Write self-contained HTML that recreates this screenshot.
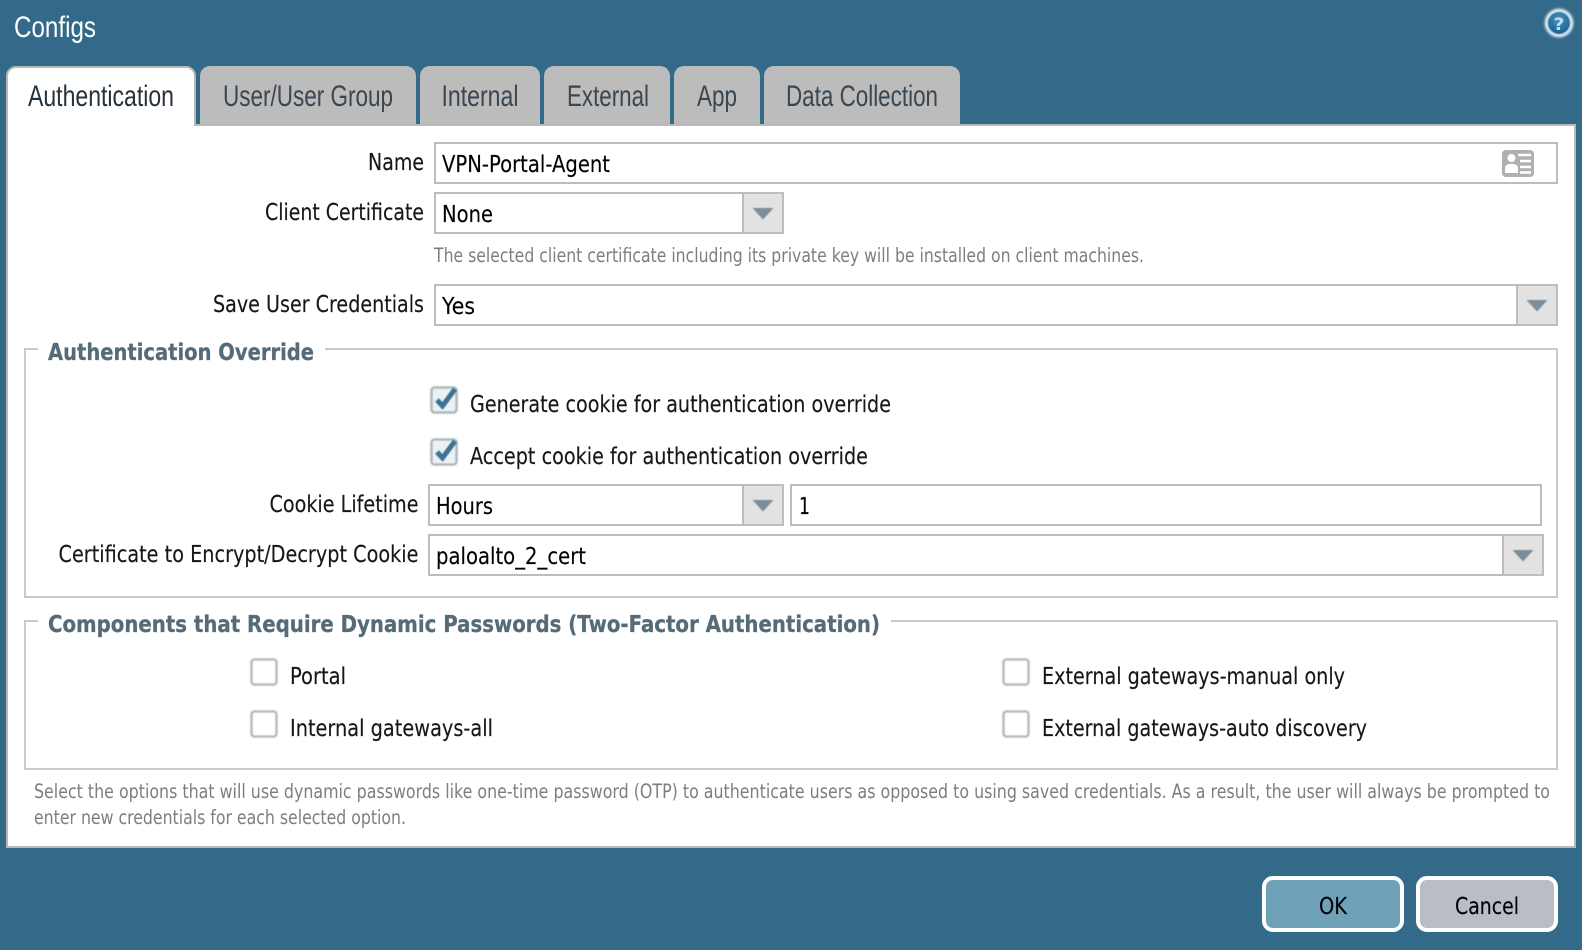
<!DOCTYPE html>
<html lang="en">
<head>
<meta charset="utf-8">
<title>Configs</title>
<style>
html,body{margin:0;padding:0;background:#346a89;width:1582px;height:950px;overflow:hidden}
svg{display:block}
text{font-family:"DejaVu Sans","Liberation Sans",sans-serif;font-size:23px;fill:#14181b;white-space:pre;stroke:currentColor;stroke-width:.15px;color:#14181b}
.tab{font-family:"Liberation Sans",sans-serif;font-size:30px;fill:#3a4650;stroke:none}
.hint{font-size:19.5px;fill:#7e7e7e;stroke:none}
.leg{font-weight:bold;font-size:23.500px;fill:#566b78;stroke:#566b78;stroke-width:.3px}
</style>
</head>
<body>
<svg width="1582" height="950" viewBox="0 0 1582 950" xmlns="http://www.w3.org/2000/svg">
<defs>
<filter id="soft" x="-20%" y="-20%" width="140%" height="140%"><feGaussianBlur stdDeviation="0.6"/></filter>
<filter id="soft2" x="-20%" y="-20%" width="140%" height="140%"><feGaussianBlur stdDeviation="1"/></filter>
<g id="arrow"><path d="M-10.500,-5 H10.500 L0,6.500 Z" fill="#7b8d99" filter="url(#soft)"/></g>
<g id="cb"><rect x="1.5" y="1.5" width="25" height="25" rx="3" fill="#fff" stroke="#b3bdc4" stroke-width="2.600" filter="url(#soft)"/></g>
<g id="cbc"><rect x="1.5" y="1.5" width="25" height="25" rx="3" fill="#eef1f3" stroke="#aeb9c0" stroke-width="2.600" filter="url(#soft)"/><path d="M7,14 L12.500,20 L25,3" fill="none" stroke="#3a7396" stroke-width="5" filter="url(#soft)"/></g>
<radialGradient id="hg" cx="50%" cy="35%" r="70%"><stop offset="0" stop-color="#4b95c0"/><stop offset="1" stop-color="#135a8c"/></radialGradient>
</defs>
<rect width="1582" height="950" fill="#346a89"/>

<text x="14" y="37" class="tab" style="fill:#fff" textLength="82" lengthAdjust="spacingAndGlyphs">Configs</text>

<circle cx="1559" cy="23" r="14.500" fill="#d7e6ee" filter="url(#soft2)"/>
<circle cx="1559" cy="23" r="11" fill="url(#hg)" filter="url(#soft)"/>
<text x="1553.500" y="30" style="font-size:17px;font-weight:bold;fill:#c6dbe6;stroke:none" textLength="11" lengthAdjust="spacingAndGlyphs">?</text>

<!-- inactive tabs -->
<path d="M200,124 V76 a10,10 0 0 1 10,-10 H406 a10,10 0 0 1 10,10 V124 Z" fill="#bcbcbc"/>
<path d="M420,124 V76 a10,10 0 0 1 10,-10 H530 a10,10 0 0 1 10,10 V124 Z" fill="#bcbcbc"/>
<path d="M544,124 V76 a10,10 0 0 1 10,-10 H660 a10,10 0 0 1 10,10 V124 Z" fill="#bcbcbc"/>
<path d="M674,124 V76 a10,10 0 0 1 10,-10 H750 a10,10 0 0 1 10,10 V124 Z" fill="#bcbcbc"/>
<path d="M764,124 V76 a10,10 0 0 1 10,-10 H950 a10,10 0 0 1 10,10 V124 Z" fill="#bcbcbc"/>

<!-- panel -->
<rect x="7" y="125" width="1568" height="722" fill="#fff" stroke="#b9b9b9" stroke-width="2"/>
<!-- active tab -->
<path d="M7,130 V76 a9,9 0 0 1 9,-9 H186 a9,9 0 0 1 9,9 V125" fill="#fff" stroke="#b9b9b9" stroke-width="2"/>
<rect x="8" y="120" width="186" height="10" fill="#fff"/>

<text x="28" y="106" class="tab" style="fill:#26313a" textLength="146" lengthAdjust="spacingAndGlyphs">Authentication</text>
<text x="223" y="106" class="tab" textLength="170" lengthAdjust="spacingAndGlyphs">User/User Group</text>
<text x="441.500" y="106" class="tab" textLength="77" lengthAdjust="spacingAndGlyphs">Internal</text>
<text x="567" y="106" class="tab" textLength="82" lengthAdjust="spacingAndGlyphs">External</text>
<text x="697" y="106" class="tab" textLength="40" lengthAdjust="spacingAndGlyphs">App</text>
<text x="786" y="106" class="tab" textLength="152" lengthAdjust="spacingAndGlyphs">Data Collection</text>

<!-- Name -->
<text x="368" y="170" textLength="56" lengthAdjust="spacingAndGlyphs">Name</text>
<rect x="435" y="143" width="1122" height="40" fill="#fff" stroke="#bdbdbd" stroke-width="2"/>
<text x="442" y="172" textLength="168" lengthAdjust="spacingAndGlyphs" style="fill:#000">VPN-Portal-Agent</text>
<rect x="1502" y="150" width="32" height="27" rx="4" fill="#b0b0b0"/>
<circle cx="1511.500" cy="158" r="4" fill="#fff"/>
<path d="M1505,173 v-5 a5,4 0 0 1 5,-4 h3 a5,4 0 0 1 5,4 v5 Z" fill="#fff"/>
<path d="M1518,155 h13 M1520,161 h11 M1520,167 h11 M1520,172.500 h11" stroke="#fff" stroke-width="2.500" fill="none"/>

<!-- Client certificate -->
<text x="265" y="220" textLength="159" lengthAdjust="spacingAndGlyphs">Client Certificate</text>
<rect x="435" y="193" width="348" height="40" fill="#fff" stroke="#bdbdbd" stroke-width="2"/>
<rect x="744" y="194" width="38" height="38" fill="#e2e2e2"/>
<path d="M743,193 v40" stroke="#bdbdbd" stroke-width="2"/>
<use href="#arrow" x="763" y="213"/>
<text x="442" y="222" textLength="51" lengthAdjust="spacingAndGlyphs" style="fill:#000">None</text>
<text x="434" y="262" class="hint" textLength="710" lengthAdjust="spacingAndGlyphs">The selected client certificate including its private key will be installed on client machines.</text>

<!-- Save -->
<text x="213" y="312" textLength="211" lengthAdjust="spacingAndGlyphs">Save User Credentials</text>
<rect x="435" y="285" width="1122" height="40" fill="#fff" stroke="#bdbdbd" stroke-width="2"/>
<rect x="1518" y="286" width="38" height="38" fill="#e2e2e2"/>
<path d="M1517,285 v40" stroke="#bdbdbd" stroke-width="2"/>
<use href="#arrow" x="1537" y="305"/>
<text x="442" y="314" textLength="33" lengthAdjust="spacingAndGlyphs" style="fill:#000">Yes</text>

<!-- Fieldset 1 -->
<path d="M38,349 H25 V597 H1557 V349 H325" fill="none" stroke="#cacaca" stroke-width="2"/>
<text x="48" y="360" class="leg" textLength="266" lengthAdjust="spacingAndGlyphs">Authentication Override</text>
<use href="#cbc" x="430" y="386"/>
<text x="470" y="412" textLength="421" lengthAdjust="spacingAndGlyphs">Generate cookie for authentication override</text>
<use href="#cbc" x="430" y="438"/>
<text x="470" y="464" textLength="398" lengthAdjust="spacingAndGlyphs">Accept cookie for authentication override</text>

<text x="269.500" y="512" textLength="149" lengthAdjust="spacingAndGlyphs">Cookie Lifetime</text>
<rect x="429" y="485" width="354" height="40" fill="#fff" stroke="#bdbdbd" stroke-width="2"/>
<rect x="744" y="486" width="38" height="38" fill="#e2e2e2"/>
<path d="M743,485 v40" stroke="#bdbdbd" stroke-width="2"/>
<use href="#arrow" x="763" y="505"/>
<text x="436" y="514" textLength="57" lengthAdjust="spacingAndGlyphs" style="fill:#000">Hours</text>
<rect x="791" y="485" width="750" height="40" fill="#fff" stroke="#bdbdbd" stroke-width="2"/>
<text x="799" y="514" textLength="11" lengthAdjust="spacingAndGlyphs" style="fill:#000">1</text>

<text x="58.500" y="562" textLength="360" lengthAdjust="spacingAndGlyphs">Certificate to Encrypt/Decrypt Cookie</text>
<rect x="429" y="535" width="1114" height="40" fill="#fff" stroke="#bdbdbd" stroke-width="2"/>
<rect x="1504" y="536" width="38" height="38" fill="#e2e2e2"/>
<path d="M1503,535 v40" stroke="#bdbdbd" stroke-width="2"/>
<use href="#arrow" x="1523" y="555"/>
<text x="436" y="564" textLength="150" lengthAdjust="spacingAndGlyphs" style="fill:#000">paloalto_2_cert</text>

<!-- Fieldset 2 -->
<path d="M38,621 H25 V769 H1557 V621 H891" fill="none" stroke="#cacaca" stroke-width="2"/>
<text x="48" y="632" class="leg" textLength="832" lengthAdjust="spacingAndGlyphs">Components that Require Dynamic Passwords (Two-Factor Authentication)</text>
<use href="#cb" x="250" y="658"/>
<text x="290" y="684" textLength="56" lengthAdjust="spacingAndGlyphs">Portal</text>
<use href="#cb" x="250" y="710"/>
<text x="290" y="736" textLength="203" lengthAdjust="spacingAndGlyphs">Internal gateways-all</text>
<use href="#cb" x="1002" y="658"/>
<text x="1042" y="684" textLength="303" lengthAdjust="spacingAndGlyphs">External gateways-manual only</text>
<use href="#cb" x="1002" y="710"/>
<text x="1042" y="736" textLength="325" lengthAdjust="spacingAndGlyphs">External gateways-auto discovery</text>

<text x="34" y="798" class="hint" textLength="1516" lengthAdjust="spacingAndGlyphs">Select the options that will use dynamic passwords like one-time password (OTP) to authenticate users as opposed to using saved credentials. As a result, the user will always be prompted to</text>
<text x="34" y="824" class="hint" textLength="372" lengthAdjust="spacingAndGlyphs">enter new credentials for each selected option.</text>

<!-- Buttons -->
<rect x="1264" y="878" width="138" height="52" rx="9" fill="#6fa1b8" stroke="#fff" stroke-width="4"/>
<text x="1319" y="914" textLength="28" lengthAdjust="spacingAndGlyphs" style="fill:#000">OK</text>
<rect x="1418" y="878" width="138" height="52" rx="9" fill="#babdc5" stroke="#fff" stroke-width="4"/>
<text x="1455" y="914" textLength="64" lengthAdjust="spacingAndGlyphs" style="fill:#000">Cancel</text>
</svg>
</body>
</html>
